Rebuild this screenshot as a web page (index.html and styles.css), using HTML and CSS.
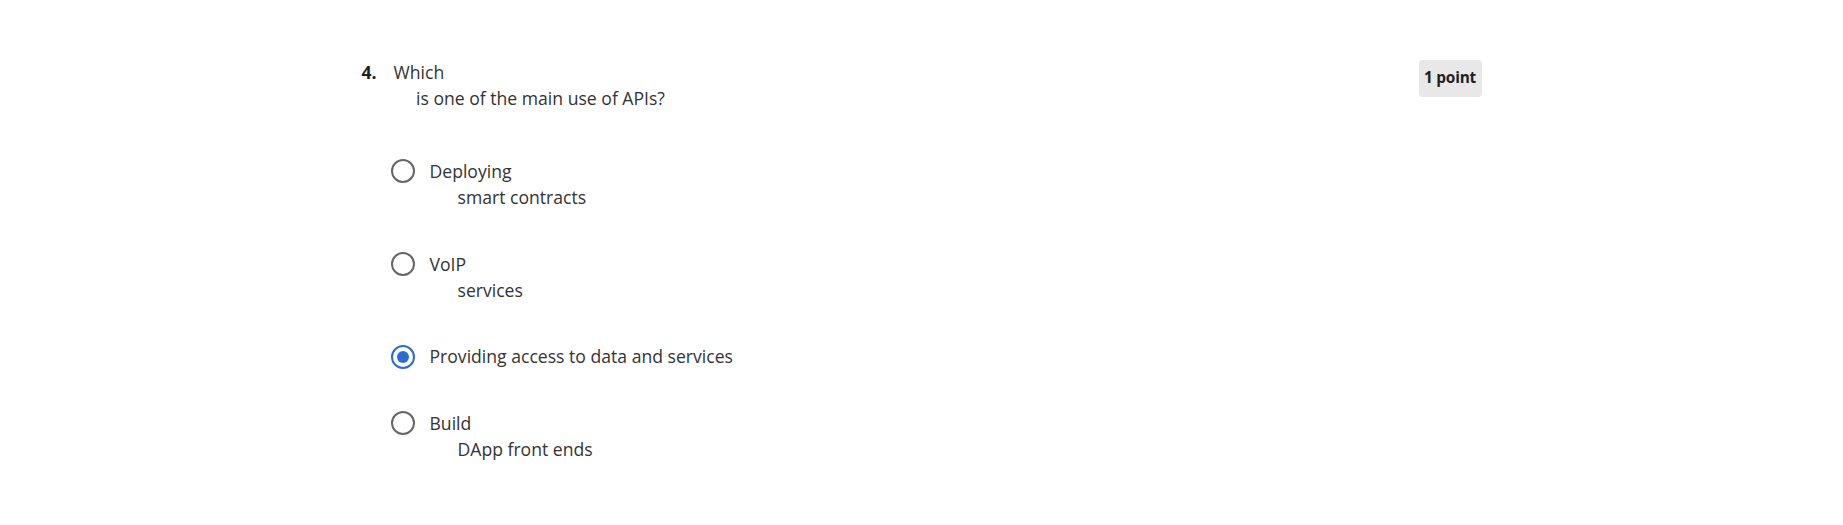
FILE: index.html
```html
<!DOCTYPE html>
<html lang="en">
<head>
<meta charset="utf-8">
<title>Question 4</title>
<link rel="stylesheet" href="styles.css">
</head>
<body>
<div class="page">
  <div class="question">
    <div class="q-head">
      <div class="q-prompt">
        <span class="q-num">4.</span>
        <div class="q-text">
          <div>Which</div>
          <div class="q-cont">is one of the main use of APIs?</div>
        </div>
      </div>
      <span class="badge">1 point</span>
    </div>
    <div class="options">
      <div class="option">
        <span class="radio"></span>
        <div class="opt-text">
          <div>Deploying</div>
          <div class="opt-cont">smart contracts</div>
        </div>
      </div>
      <div class="option">
        <span class="radio"></span>
        <div class="opt-text">
          <div>VoIP</div>
          <div class="opt-cont">services</div>
        </div>
      </div>
      <div class="option">
        <span class="radio checked"></span>
        <div class="opt-text">
          <div>Providing access to data and services</div>
        </div>
      </div>
      <div class="option">
        <span class="radio"></span>
        <div class="opt-text">
          <div>Build</div>
          <div class="opt-cont">DApp front ends</div>
        </div>
      </div>
    </div>
  </div>
</div>
</body>
</html>
```
FILE: styles.css
```css
html, body {
  margin: 0;
  padding: 0;
  background: #ffffff;
}

body {
  font-family: "Open Sans", "Noto Sans", sans-serif;
  font-size: 17.6px;
  line-height: 26.4px;
  color: #333333;
}

.page {
  width: 1120px;
  margin: 0 auto;
  padding-top: 58px;
}

.q-head {
  display: flex;
  justify-content: space-between;
  align-items: flex-start;
}

.q-prompt {
  display: flex;
  margin-top: 1px;
}

.q-num {
  font-weight: 700;
  color: #1f1f1f;
  width: 32px;
}

.q-cont {
  padding-left: 22.5px;
}

.badge {
  display: inline-flex;
  align-items: center;
  justify-content: center;
  height: 37px;
  width: 63px;
  margin-top: 1.5px;
  box-sizing: border-box;
  background: #e8e8e8;
  border-radius: 4px;
  font-size: 15.4px;
  font-weight: 700;
  color: #1f1f1f;
  letter-spacing: -0.2px;
}

.options {
  display: flex;
  flex-direction: column;
  gap: 40px;
  margin-top: 46px;
  padding-left: 29.5px;
}

.option {
  display: flex;
  align-items: flex-start;
  gap: 14.5px;
}

.radio {
  flex: none;
  width: 24px;
  height: 24px;
  box-sizing: border-box;
  border: 2.8px solid #666666;
  border-radius: 50%;
  margin-top: 1.2px;
  display: flex;
  align-items: center;
  justify-content: center;
}

.radio.checked {
  border-color: #2a6fd0;
}

.radio.checked::after {
  content: "";
  width: 12px;
  height: 12px;
  border-radius: 50%;
  background: #2a6fd0;
}

.opt-cont {
  padding-left: 28px;
}
```
